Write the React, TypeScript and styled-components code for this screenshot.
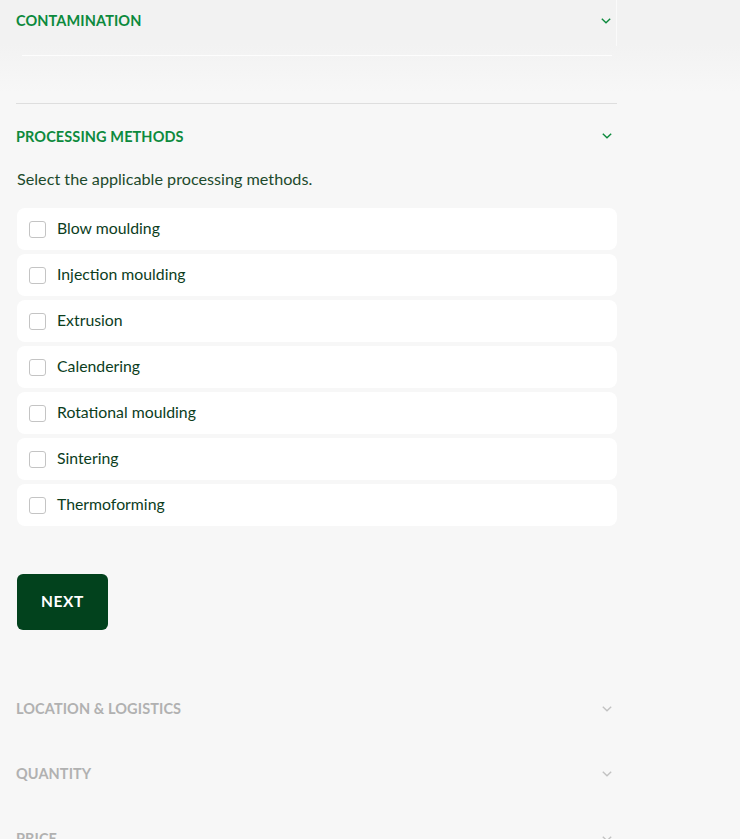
import React from "react";
import styled, { createGlobalStyle } from "styled-components";

const Global = createGlobalStyle`
  html, body { margin: 0; padding: 0; background: #f7f7f7; }
  body { font-family: Lato, "Open Sans", sans-serif; -webkit-font-smoothing: antialiased; }
`;

const Page = styled.div`
  width: 740px;
  min-height: 839px;
  background: #f7f7f7;
  overflow: hidden;
`;

const TopBand = styled.div`
  background: linear-gradient(#f2f2f2 0, #f2f2f2 44px, #f7f7f7 92px);
  height: 104px;
`;

const Column = styled.div`
  width: 601px;
  margin-left: 16px;
`;

const TopColumn = styled(Column)`
  height: 104px;
  display: flex;
  flex-direction: column;
  border-bottom: 1px solid #dedede;
  box-sizing: border-box;
`;

const HeaderRow = styled.div<{ $h: number }>`
  height: ${(p) => p.$h}px;
  display: flex;
  align-items: center;
  justify-content: space-between;
  padding-right: 5px;
`;

const TopHeader = styled(HeaderRow)`
  border-right: 1px solid #fafafa;
  margin-bottom: -4px;
  padding-bottom: 5px;
  box-sizing: border-box;
`;

const WhiteRule = styled.div`
  height: 1px;
  background: #fdfdfd;
  margin: 13px 5px 0 6px;
`;

const Title = styled.span<{ $muted?: boolean }>`
  font-size: 14.5px;
  font-weight: 700;
  letter-spacing: 0.1px;
  color: ${(p) => (p.$muted ? "#b1b1b1" : "#0d8a3d")};
`;

const Description = styled.p`
  margin: 2px 0 0 1px;
  font-size: 16.2px;
  color: #1d4a2c;
  line-height: 18px;
`;

const List = styled.div`
  display: flex;
  flex-direction: column;
  gap: 4px;
  margin-top: 20px;
`;

const OptionRow = styled.label`
  height: 42px;
  background: #ffffff;
  border-radius: 8px;
  margin-left: 1px;
  display: flex;
  align-items: center;
  padding-left: 12px;
  gap: 11px;
  cursor: pointer;
`;

const Box = styled.span`
  width: 15px;
  height: 15px;
  border: 1.5px solid #c4c4c4;
  border-radius: 3px;
  background: #fff;
`;

const OptionLabel = styled.span`
  font-size: 15.8px;
  color: #0c3d1d;
  line-height: 18px;
  margin-top: -2px;
`;

const NextButton = styled.button`
  margin: 48px 0 0 1px;
  width: 91px;
  height: 56px;
  border: none;
  border-radius: 6px;
  background: #02421d;
  color: #fff;
  font-family: Lato, sans-serif;
  font-weight: 700;
  font-size: 15.5px;
  letter-spacing: 0.6px;
  padding: 0 0 2px;
`;

const Collapsed = styled.div`
  margin-top: 46px;
  display: flex;
  flex-direction: column;
`;

const Chevron = ({ color }: { color: string }) => (
  <svg width="10" height="6" viewBox="0 0 10 6">
    <path d="M0.8 0.8 L5 4.8 L9.2 0.8" fill="none" stroke={color} strokeWidth="1.4" />
  </svg>
);

const options = [
  "Blow moulding",
  "Injection moulding",
  "Extrusion",
  "Calendering",
  "Rotational moulding",
  "Sintering",
  "Thermoforming",
];

export default function App() {
  return (
    <Page>
      <Global />
      <TopBand>
        <TopColumn>
          <TopHeader $h={46}>
            <Title>CONTAMINATION</Title>
            <Chevron color="#0d8a3d" />
          </TopHeader>
          <WhiteRule />
        </TopColumn>
      </TopBand>
      <Column>
        <HeaderRow $h={64}>
          <Title>PROCESSING METHODS</Title>
          <Chevron color="#0d8a3d" />
        </HeaderRow>
        <Description>Select the applicable processing methods.</Description>
        <List>
          {options.map((o) => (
            <OptionRow key={o}>
              <Box />
              <OptionLabel>{o}</OptionLabel>
            </OptionRow>
          ))}
        </List>
        <NextButton>NEXT</NextButton>
        <Collapsed>
          {["LOCATION & LOGISTICS", "QUANTITY", "PRICE"].map((t) => (
            <HeaderRow key={t} $h={65}>
              <Title $muted>{t}</Title>
              <Chevron color="#c2c2c2" />
            </HeaderRow>
          ))}
        </Collapsed>
      </Column>
    </Page>
  );
}
